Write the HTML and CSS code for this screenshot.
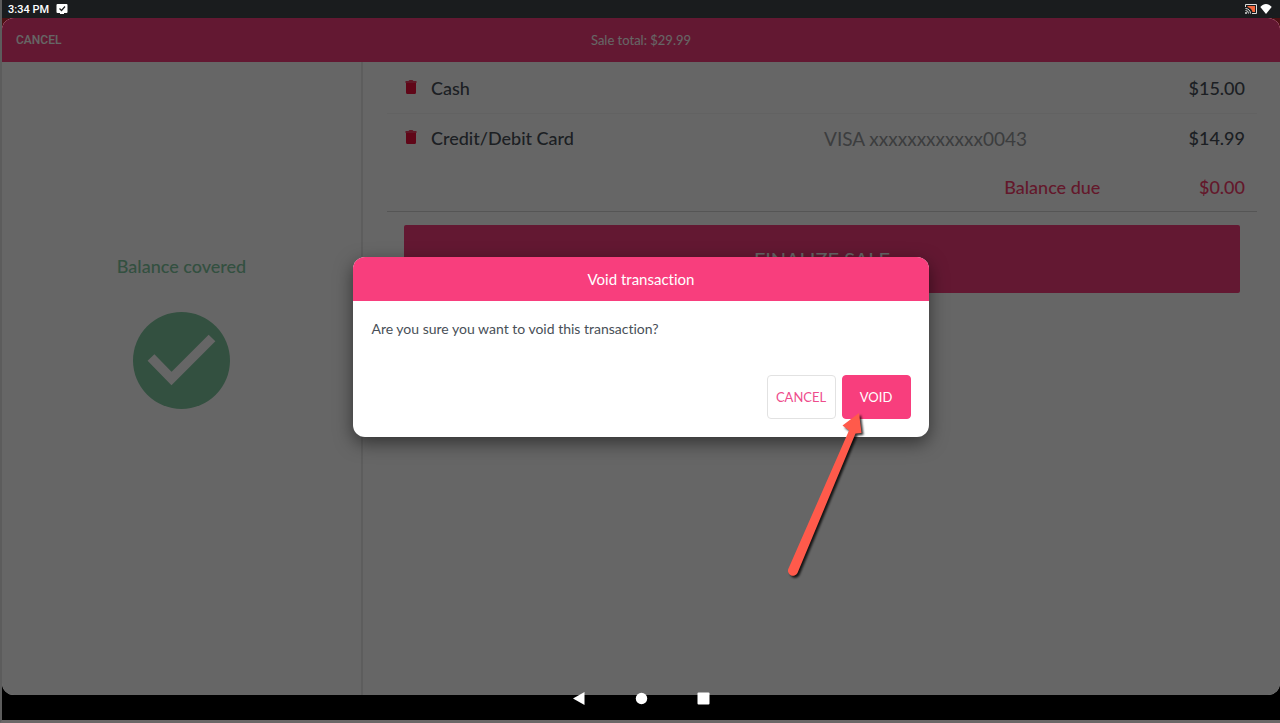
FILE: index.html
```html
<!DOCTYPE html>
<html lang="en">
<head>
    <meta charset="UTF-8">
    <meta name="viewport" content="width=device-width, initial-scale=1.0">
    <title>Void transaction</title>
    <link rel="stylesheet" href="styles.css">
</head>
<body>

<div class="status-bar">
    <span>3:34 PM</span>
    <svg class="status-task" width="12" height="11" viewBox="0 0 12 11">
        <path d="M1.500 0h9a1 1 0 0 1 1 1v7a1 1 0 0 1-1 1H8v1H4V9H1.500a1 1 0 0 1-1-1V1a1 1 0 0 1 1-1z" fill="#fff"/>
        <path d="M3.500 4.500l2 2 3.500-4" fill="none" stroke="#1a1c1e" stroke-width="1.200"/>
    </svg>
    <span class="spacer"></span>
    <svg width="12" height="10" viewBox="0 0 12 10">
        <path d="M.5 3V.5h11v9H7" fill="none" stroke="#ddd"/>
        <path d="M2.500 2h7.500v6H7.500C7 5.500 5 3.500 2.500 3z" fill="#f4663c"/>
        <path d="M.5 4.500a5 5 0 0 1 5 5M.5 6.500a3 3 0 0 1 3 3" fill="none" stroke="#ddd"/>
        <circle cx="1" cy="9" r="1" fill="#ddd"/>
    </svg>
    <svg width="12" height="10" viewBox="0 0 12 10">
        <path d="M6 10L.3 3C2 .9 4 0 6 0s4 .9 5.700 3z" fill="#fff"/>
    </svg>
</div>

<div class="app-frame">
    <div class="app">
        <header class="top-bar">
            <button type="button" class="top-cancel">CANCEL</button>
            <span class="sale-total">Sale total: $29.99</span>
        </header>

        <main class="content">
            <section class="balance">
                <h2>Balance covered</h2>
                <svg class="balance-check" width="98" height="98" viewBox="0 0 98 98">
                    <circle cx="48.500" cy="48.500" r="48.500" fill="#80c8a0"/>
                    <path d="M18 45.500L38.500 66.500L79 26" fill="none" stroke="#fff" stroke-width="9.500"/>
                </svg>
            </section>

            <section class="payments">
                <table>
                    <colgroup>
                        <col class="col-delete">
                        <col>
                        <col class="col-detail">
                        <col class="col-amount">
                    </colgroup>
                    <tbody>
                        <tr class="line">
                            <td>
                                <button type="button" class="delete" aria-label="Delete cash payment">
                                    <svg width="12" height="14" viewBox="0 0 12 14"><path d="M1 3h10v9.500a1.500 1.500 0 0 1-1.500 1.500h-7A1.500 1.500 0 0 1 1 12.500z" fill="#ef0f3c"/><path d="M.5 1H3.500L4.500 0h3l1 1h3v2H.5z" fill="#ef3f62"/></svg>
                                </button>
                            </td>
                            <td>Cash</td>
                            <td></td>
                            <td class="amount">$15.00</td>
                        </tr>
                        <tr>
                            <td>
                                <button type="button" class="delete" aria-label="Delete card payment">
                                    <svg width="12" height="14" viewBox="0 0 12 14"><path d="M1 3h10v9.500a1.500 1.500 0 0 1-1.500 1.500h-7A1.500 1.500 0 0 1 1 12.500z" fill="#ef0f3c"/><path d="M.5 1H3.500L4.500 0h3l1 1h3v2H.5z" fill="#ef3f62"/></svg>
                                </button>
                            </td>
                            <td>Credit/Debit Card</td>
                            <td class="detail">VISA xxxxxxxxxxxx0043</td>
                            <td class="amount">$14.99</td>
                        </tr>
                    </tbody>
                    <tfoot>
                        <tr class="due">
                            <td></td>
                            <td></td>
                            <td class="due-label">Balance due</td>
                            <td class="amount">$0.00</td>
                        </tr>
                    </tfoot>
                </table>
                <button type="button" class="finalize">FINALIZE SALE</button>
            </section>
        </main>

        <div class="overlay">
            <div class="modal" role="dialog" aria-labelledby="modalTitle">
                <h1 id="modalTitle">Void transaction</h1>
                <div class="modal-body">
                    <p>Are you sure you want to void this transaction?</p>
                    <div class="actions">
                        <button type="button" class="btn">CANCEL</button>
                        <div class="pointed">
                            <button type="button" class="btn btn-primary">VOID</button>
                            <svg class="arrow" width="90" height="180" viewBox="0 0 90 180">
                                <path d="M74 5L57.500 17.500L64 22.500L3.500 160.500A5 5 0 0 0 12.500 165L70.500 25.500L76.500 25z" fill="#ff5a4b"/>
                            </svg>
                        </div>
                    </div>
                </div>
            </div>
        </div>
    </div>
</div>

<nav class="nav-bar">
    <button type="button" aria-label="Back"><svg width="13" height="13" viewBox="0 0 13 13"><path d="M11.500 0v13L0 6.500z"/></svg></button>
    <button type="button" aria-label="Home"><svg width="13" height="13" viewBox="0 0 13 13"><circle cx="6.500" cy="6.500" r="5.700"/></svg></button>
    <button type="button" aria-label="Recent apps"><svg width="13" height="13" viewBox="0 0 13 13"><rect x=".5" y=".5" width="12" height="12" rx="1"/></svg></button>
</nav>

</body>
</html>
```
FILE: styles.css
```css
* {
    box-sizing: border-box;
}
body {
    margin: 0;
    min-height: 100vh;
    display: flex;
    flex-direction: column;
    background-color: #000;
    border-left: 2px solid #5c5c5c;
    border-bottom: 3px solid #6b6767;
    font-family: Lato, sans-serif;
    font-variant-ligatures: none;
    color: #484f57;
}
button {
    font-family: inherit;
    padding: 0;
    border: none;
    background: none;
    cursor: pointer;
}
svg {
    display: block;
}
.status-bar {
    height: 18px;
    padding: 0 8px 0 6px;
    display: flex;
    align-items: center;
    gap: 3px;
    background-color: #1a1c1e;
    color: #fff;
    font: 500 11px Roboto, sans-serif;
}
.status-task {
    margin-left: 4px;
}
.spacer {
    flex: 1;
}
.app-frame {
    flex: 1;
    display: flex;
    background: linear-gradient(#4d1114 50%, #000 50%);
}
.app {
    position: relative;
    flex: 1;
    display: flex;
    flex-direction: column;
    background-color: #fff;
    border-radius: 12px;
    overflow: hidden;
}
.top-bar {
    height: 44px;
    padding: 0 14px;
    display: grid;
    grid-template-columns: 1fr auto 1fr;
    align-items: center;
    background-color: #f83e7d;
    color: #fff;
    font-size: 13px;
}
.top-cancel {
    justify-self: start;
    color: #fff;
    font: 500 12px Roboto, sans-serif;
}
.content {
    flex: 1;
    display: grid;
    grid-template-columns: 361px 1fr;
}
.balance {
    padding-top: 192px;
    display: flex;
    flex-direction: column;
    align-items: center;
    border-right: 2px solid #e8e8e8;
}
.balance h2 {
    margin: 0;
    font-size: 18px;
    line-height: 24px;
    font-weight: 500;
    color: #80c8a0;
}
.balance-check {
    margin-top: 34px;
}
.payments {
    padding: 1px 23px 0 24px;
}
table {
    width: 100%;
    table-layout: fixed;
    border-collapse: collapse;
    border-bottom: 1px solid #d4d4d4;
    font-size: 18px;
    font-weight: 500;
}
td {
    height: 50px;
    padding: 0;
}
.col-delete {
    width: 44px;
}
.col-detail {
    width: 32%;
}
.col-amount {
    width: 18%;
}
.line {
    border-bottom: 1px solid #f4f4f4;
}
.delete {
    display: block;
    margin: 0 0 2px 18px;
}
.amount {
    padding-right: 12px;
    text-align: right;
}
.detail {
    padding-left: 2px;
    font-size: 19px;
    font-weight: 400;
    color: #96999c;
}
.due {
    color: #f83e6d;
}
.due td {
    height: 48px;
}
.due-label {
    text-align: right;
}
.finalize {
    display: block;
    width: calc(100% - 34px);
    height: 68px;
    margin: 13px 17px 0;
    border-radius: 2px;
    background-color: #f83e7d;
    color: #fff;
    font-size: 20px;
}
.overlay {
    position: absolute;
    inset: 0;
    padding-bottom: 19px;
    display: flex;
    align-items: center;
    justify-content: center;
    background-color: rgba(0,0,0,0.6);
}
.modal {
    width: 45%;
    border-radius: 12px;
    background-color: #fff;
    box-shadow: 0 6px 18px rgba(0,0,0,0.5);
}
.modal h1 {
    margin: 0;
    border-radius: 12px 12px 0 0;
    background-color: #f83e7d;
    color: #fff;
    font-size: 15px;
    line-height: 44px;
    font-weight: 400;
    text-align: center;
}
.modal-body {
    padding: 18px;
}
.modal-body p {
    margin: 0;
    font-size: 14px;
    line-height: 20px;
}
.actions {
    margin-top: 36px;
    display: flex;
    justify-content: flex-end;
    gap: 6px;
}
.btn {
    width: 69px;
    height: 44px;
    border: 1px solid #e2e2e2;
    border-radius: 4px;
    color: #ee4c8c;
    font-size: 13px;
}
.btn-primary {
    border-color: #f83e7d;
    background-color: #f83e7d;
    color: #fff;
}
.pointed {
    position: relative;
}
/* callout arrow lies over the void button and the page behind */
.arrow {
    position: absolute;
    left: -57px;
    top: 33px;
    overflow: visible;
    pointer-events: none;
    filter: drop-shadow(2px 2px 1px rgba(0,0,0,0.8));
}
.nav-bar {
    position: relative;
    height: 28px;
    margin-top: -3px;
    display: flex;
    align-items: flex-start;
    justify-content: center;
}
.nav-bar button {
    width: 62px;
    display: flex;
    justify-content: center;
}
.nav-bar svg {
    fill: #fff;
}
```
